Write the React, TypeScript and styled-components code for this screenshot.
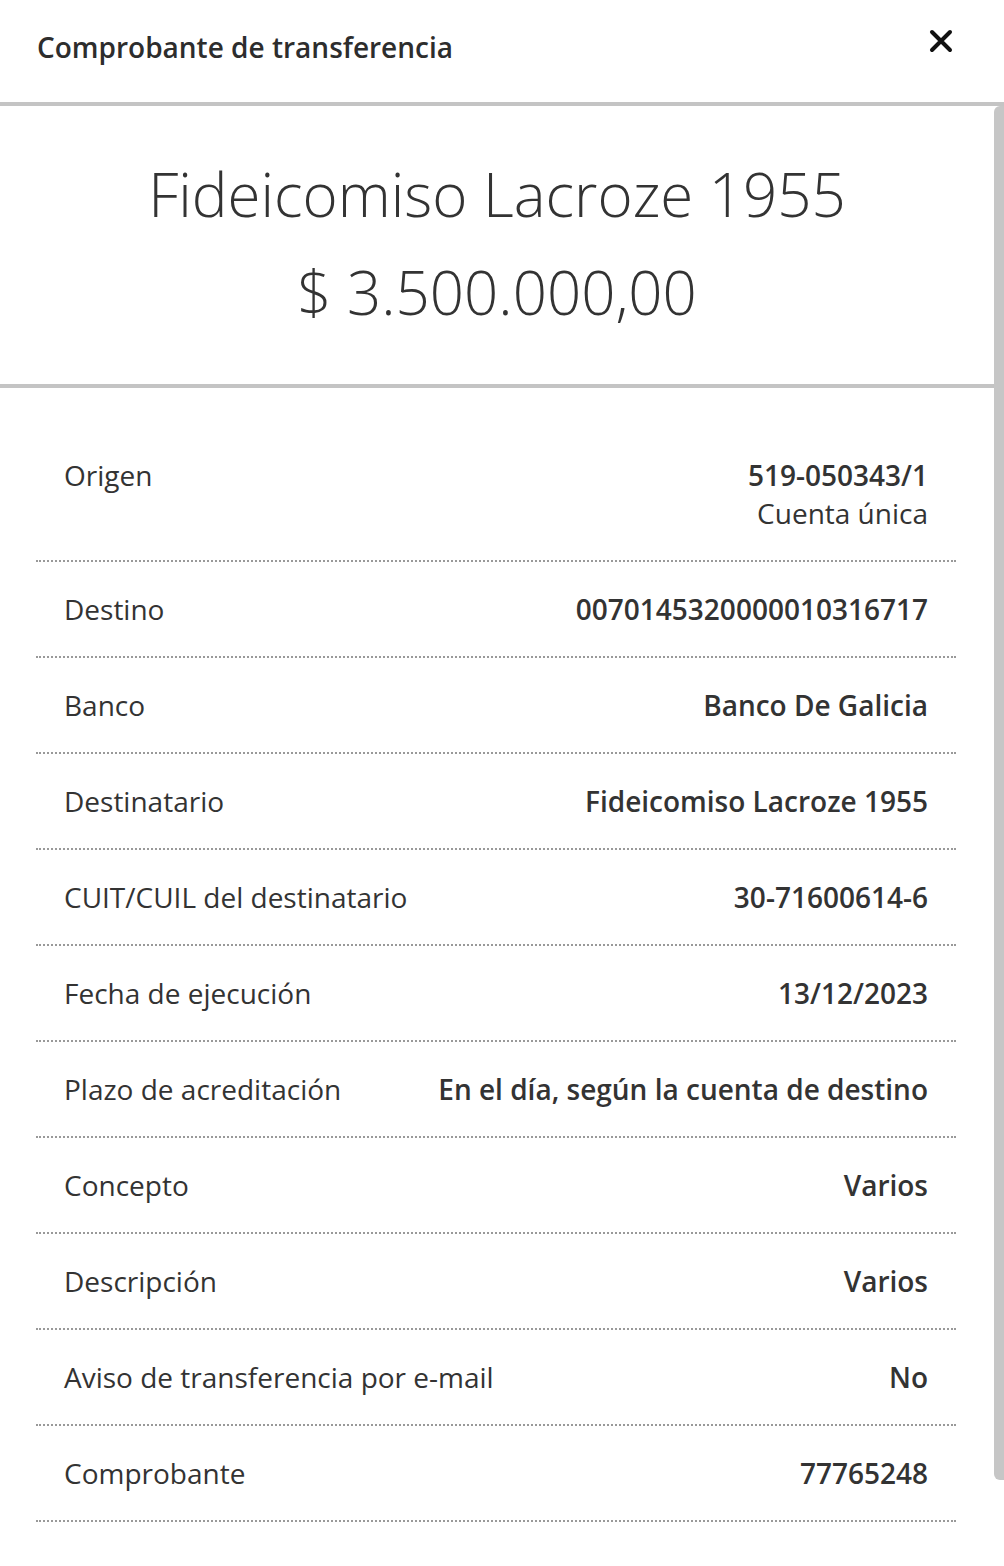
import styled, { createGlobalStyle } from 'styled-components';

interface IDetailRow {
  label: string;
  value: string;
  sub?: string;
}

const DETAIL_ROWS: IDetailRow[] = [
  { label: 'Origen', value: '519-050343/1', sub: 'Cuenta única' },
  { label: 'Destino', value: '0070145320000010316717' },
  { label: 'Banco', value: 'Banco De Galicia' },
  { label: 'Destinatario', value: 'Fideicomiso Lacroze 1955' },
  { label: 'CUIT/CUIL del destinatario', value: '30-71600614-6' },
  { label: 'Fecha de ejecución', value: '13/12/2023' },
  { label: 'Plazo de acreditación', value: 'En el día, según la cuenta de destino' },
  { label: 'Concepto', value: 'Varios' },
  { label: 'Descripción', value: 'Varios' },
  { label: 'Aviso de transferencia por e-mail', value: 'No' },
  { label: 'Comprobante', value: '77765248' },
];

const App = () => {
  return (
    <>
      <GlobalStyle />
      <Modal>
        <Header>
          <Title>Comprobante de transferencia</Title>
          <CloseButton aria-label="Cerrar">
            <svg width="24" height="24" viewBox="0 0 24 24">
              <path d="M3 3 L21 21 M21 3 L3 21" stroke="#111" strokeWidth="4" strokeLinecap="round" />
            </svg>
          </CloseButton>
        </Header>
        <Divider />
        <Summary>
          <Recipient>Fideicomiso Lacroze 1955</Recipient>
          <Amount>$ 3.500.000,00</Amount>
        </Summary>
        <Divider />
        <DetailList>
          {DETAIL_ROWS.map((row) => (
            <Row key={row.label}>
              <Label>{row.label}</Label>
              <ValueBox>
                <Value>{row.value}</Value>
                {row.sub && <SubValue>{row.sub}</SubValue>}
              </ValueBox>
            </Row>
          ))}
        </DetailList>
        <ScrollThumb />
      </Modal>
    </>
  );
};

export default App;

const GlobalStyle = createGlobalStyle`
  body {
    margin: 0;
    background: #fff;
    font-family: 'Open Sans', 'Noto Sans', sans-serif;
    color: #333;
  }
`;

const Modal = styled.div`
  position: relative;
  width: 1004px;
  min-height: 1566px;
  background: #fff;
`;

const Header = styled.div`
  height: 102px;
  display: flex;
  align-items: center;
  justify-content: space-between;
  padding: 0 47px 8px 37px;
  box-sizing: border-box;
`;

const Title = styled.h1`
  margin: 0;
  font-size: 28px;
  font-weight: 600;
  color: #2d2d2d;
`;

const CloseButton = styled.button`
  display: flex;
  align-items: center;
  justify-content: center;
  width: 32px;
  height: 32px;
  padding: 0;
  border: none;
  background: none;
  margin-bottom: 12px;
  cursor: pointer;
`;

const Divider = styled.div`
  height: 4px;
  background-color: #c4c4c4;
`;

const Summary = styled.div`
  height: 278px;
  display: flex;
  flex-direction: column;
  align-items: center;
  justify-content: center;
  gap: 16px;
  padding: 0 10px 4px 0;
  box-sizing: border-box;
`;

const Recipient = styled.div`
  font-size: 60px;
  font-weight: 300;
  line-height: 82px;
  color: #333;
`;

const Amount = styled.div`
  font-size: 60px;
  font-weight: 300;
  line-height: 82px;
  color: #333;
`;

const DetailList = styled.div`
  padding: 40px 48px 0 36px;
`;

const Row = styled.div`
  display: flex;
  align-items: flex-start;
  justify-content: space-between;
  padding: 28px 28px;
  border-bottom: 2px dotted #999;
`;

const Label = styled.span`
  font-size: 28px;
  line-height: 38px;
  font-weight: 400;
  color: #333;
`;

const ValueBox = styled.div`
  display: flex;
  flex-direction: column;
  align-items: flex-end;
`;

const Value = styled.span`
  font-size: 28px;
  line-height: 38px;
  font-weight: 600;
  color: #333;
`;

const SubValue = styled.span`
  font-size: 28px;
  line-height: 38px;
  font-weight: 400;
  color: #333;
`;

const ScrollThumb = styled.div`
  position: absolute;
  top: 106px;
  right: 0;
  width: 10px;
  height: 1374px;
  border-radius: 6px 0 0 6px;
  background-color: #c6c6c6;
`;
